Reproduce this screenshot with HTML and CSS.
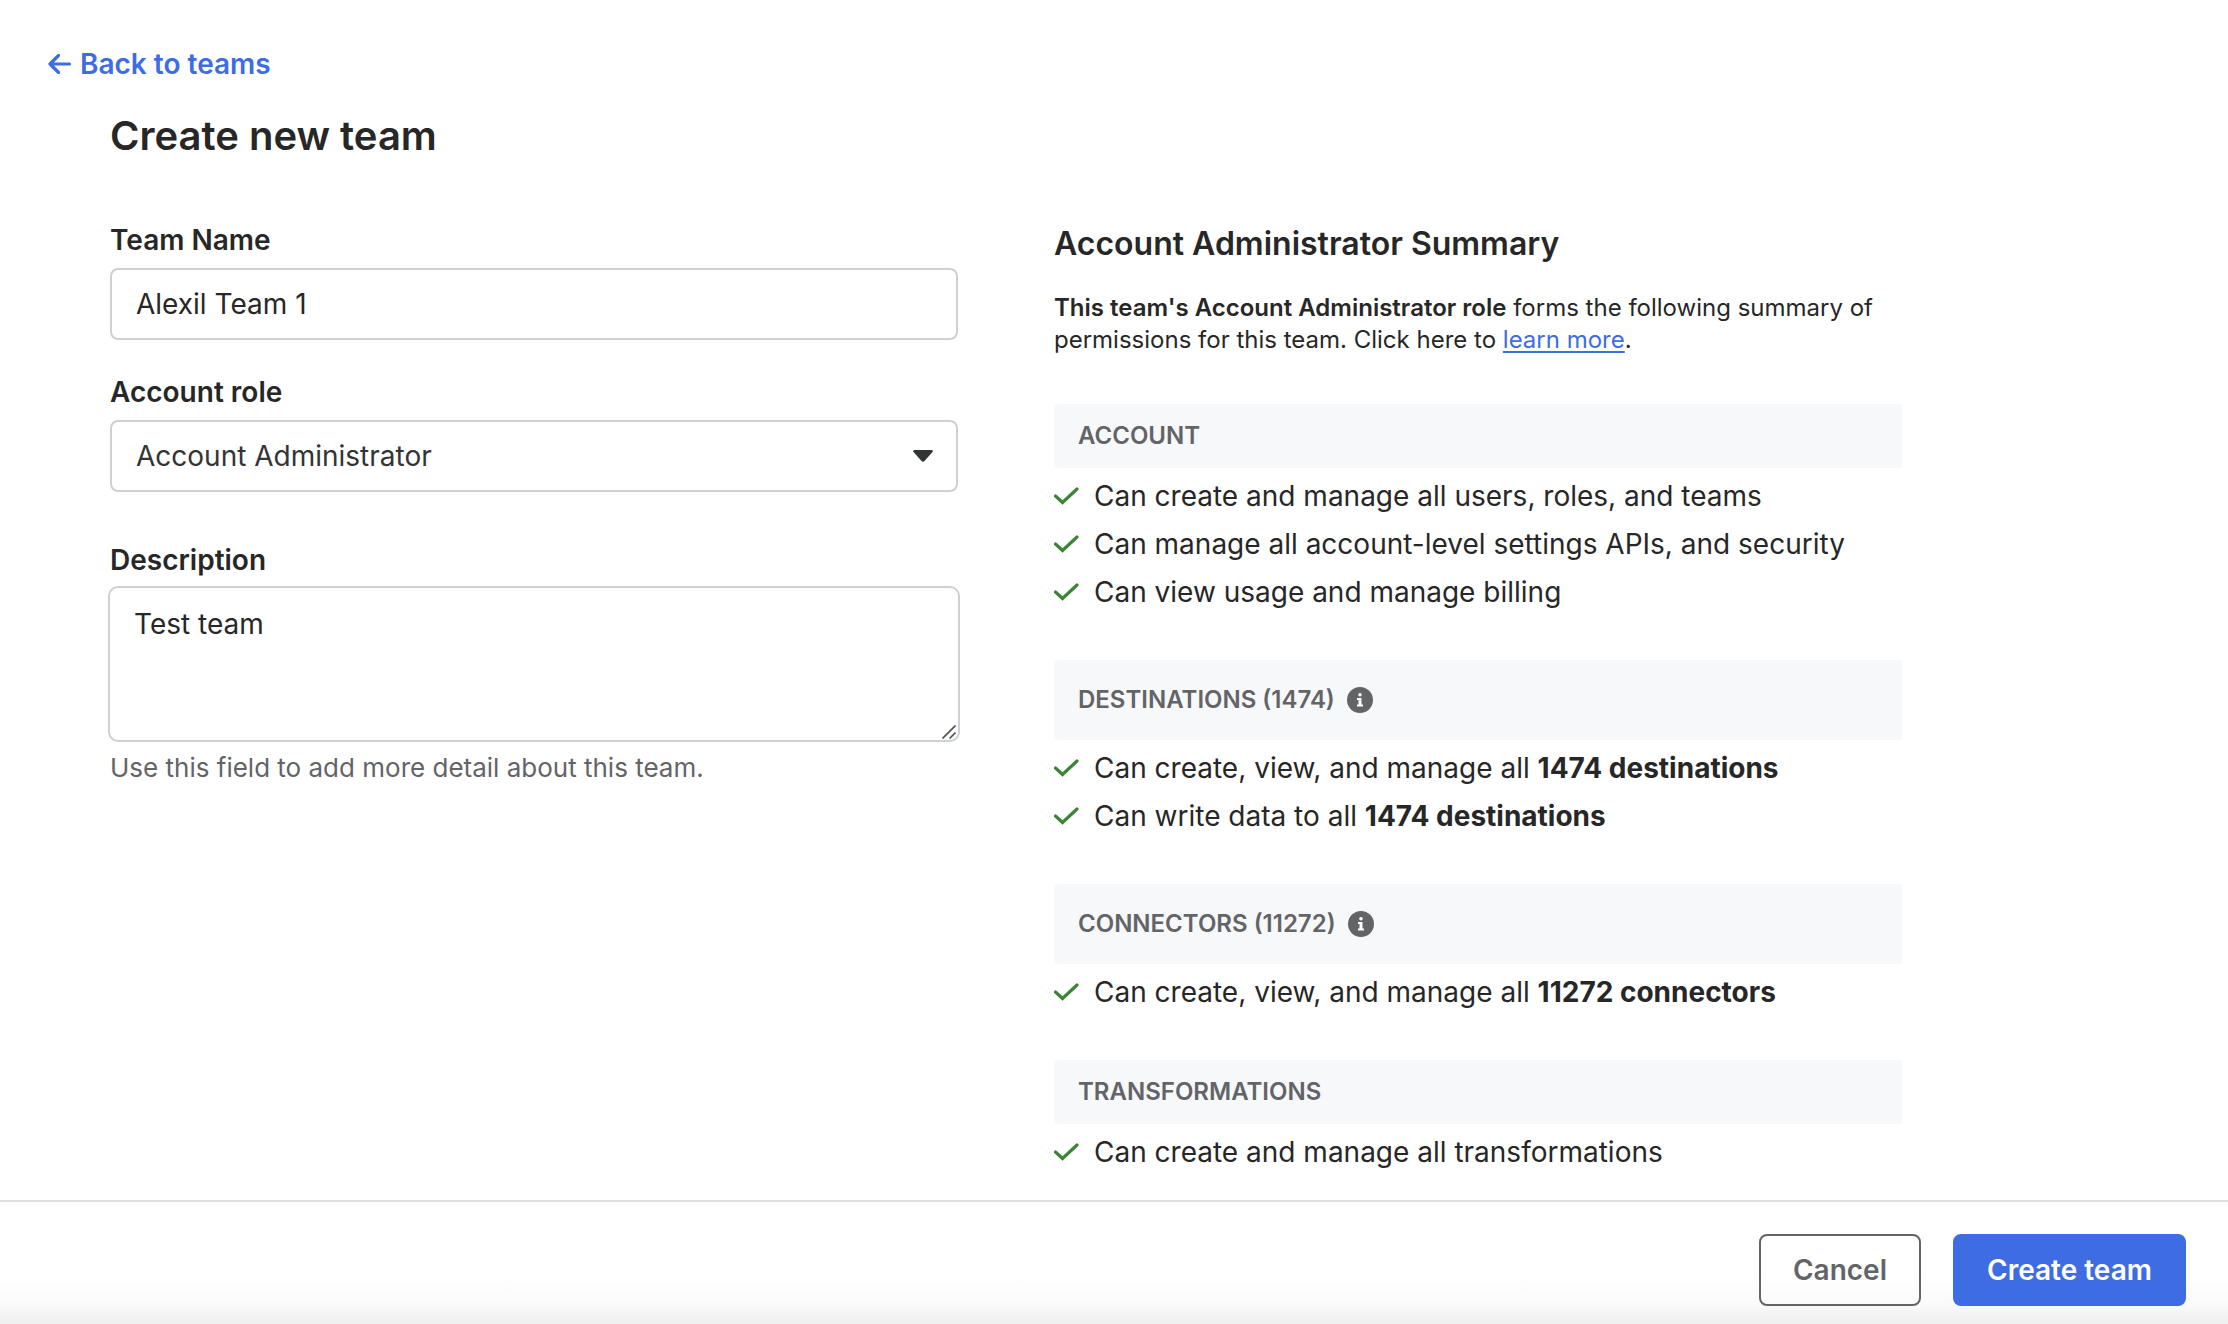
FILE: index.html
```html
<!DOCTYPE html>
<html lang="en">
<head>
<meta charset="utf-8">
<meta name="viewport" content="width=device-width, initial-scale=1">
<title>Create new team</title>
<link rel="stylesheet" href="styles.css">
</head>
<body>
<svg class="sprite" aria-hidden="true">
  <symbol id="check" viewBox="0 0 25 18"><path d="M1.500 9 8.500 15.500 23 2" fill="none" stroke="currentColor" stroke-width="3.200" stroke-linecap="round" stroke-linejoin="miter"/></symbol>
  <symbol id="info" viewBox="0 0 26 26"><circle cx="13" cy="13" r="13" fill="currentColor"/><circle cx="13" cy="7.800" r="1.800" fill="#fff"/><path d="M10 11h4.500v6.500H16V19.500H10V17.500h1.500V13H10z" fill="#fff"/></symbol>
</svg>
<main class="page">
  <a class="back" href="#teams">
    <svg class="back-icon" viewBox="0 0 24 20" aria-hidden="true"><path d="M10.500 1.500 2 10 10.500 18.500M2 10H21.500" fill="none" stroke="currentColor" stroke-width="3.200" stroke-linecap="round" stroke-linejoin="round"/></svg>
    Back to teams
  </a>
  <div class="content">
    <h1 class="title">Create new team</h1>
    <div class="columns">
      <form class="form" id="team-form">
        <div class="field">
          <label class="label" for="name">Team Name</label>
          <input class="control" id="name" type="text" value="Alexil Team 1">
        </div>
        <div class="field">
          <label class="label" for="role">Account role</label>
          <div class="select-wrap">
            <select class="control select" id="role"><option>Account Administrator</option></select>
            <svg class="caret" viewBox="0 0 20 12" aria-hidden="true"><path d="M1.500 0h17q2.200.4 1 2L11.500 11q-1.500 1.500-3 0L.5 2Q-.7.4 1.500 0z" fill="#333436"/></svg>
          </div>
        </div>
        <div class="field field-description">
          <label class="label" for="description">Description</label>
          <div class="area-wrap">
            <textarea class="control area" id="description" aria-describedby="hint">Test team</textarea>
            <svg class="grip" viewBox="0 0 14 14" aria-hidden="true"><path d="M.5 13.500 13.500.5M7.500 13.500 13.500 7.500" fill="none" stroke="#505154" stroke-width="1.600"/></svg>
          </div>
          <p class="hint" id="hint">Use this field to add more detail about this team.</p>
        </div>
      </form>
      <section class="summary">
        <h2 class="summary-title">Account Administrator Summary</h2>
        <p class="intro"><b>This team's Account Administrator role</b> forms the following summary of permissions for this team. Click here to <a class="link" href="#roles">learn more</a>.</p>
        <div class="groups">
          <section>
            <h3 class="group-title">ACCOUNT</h3>
            <ul class="list">
              <li class="item"><svg class="check"><use href="#check"/></svg><span>Can create and manage all users, roles, and teams</span></li>
              <li class="item"><svg class="check"><use href="#check"/></svg><span>Can manage all account-level settings APIs, and security</span></li>
              <li class="item"><svg class="check"><use href="#check"/></svg><span>Can view usage and manage billing</span></li>
            </ul>
          </section>
          <section>
            <h3 class="group-title group-title-tall">DESTINATIONS (1474)<svg class="info"><use href="#info"/></svg></h3>
            <ul class="list">
              <li class="item"><svg class="check"><use href="#check"/></svg><span>Can create, view, and manage all <b class="count">1474 destinations</b></span></li>
              <li class="item"><svg class="check"><use href="#check"/></svg><span>Can write data to all <b class="count">1474 destinations</b></span></li>
            </ul>
          </section>
          <section>
            <h3 class="group-title group-title-tall">CONNECTORS (11272)<svg class="info"><use href="#info"/></svg></h3>
            <ul class="list">
              <li class="item"><svg class="check"><use href="#check"/></svg><span>Can create, view, and manage all <b class="count">11272 connectors</b></span></li>
            </ul>
          </section>
          <section>
            <h3 class="group-title">TRANSFORMATIONS</h3>
            <ul class="list">
              <li class="item"><svg class="check"><use href="#check"/></svg><span>Can create and manage all transformations</span></li>
            </ul>
          </section>
        </div>
      </section>
    </div>
  </div>
</main>
<footer class="footer">
  <button class="button button-cancel" type="button">Cancel</button>
  <button class="button button-primary" type="submit" form="team-form">Create team</button>
</footer>
</body>
</html>
```

FILE: styles.css
```css
* {
  box-sizing: border-box;
}

body {
  margin: 0;
  min-height: 100vh;
  display: flex;
  flex-direction: column;
  background: #fff;
  color: #272727;
  font: 400 28px/40px Inter, "Liberation Sans", sans-serif;
}

h1, h2, h3, p, ul {
  margin: 0;
  padding: 0;
}

.sprite {
  display: none;
}

.page {
  flex: 1;
  padding: 44px 48px 24px;
}

.back {
  display: inline-flex;
  align-items: center;
  gap: 8px;
  color: #3e6ce2;
  font-weight: 600;
  text-decoration: none;
}

.back-icon {
  width: 24px;
  height: 20px;
}

.content {
  max-width: 1792px;
  margin-left: 62px;
}

.title {
  margin-top: 24px;
  font-size: 40px;
  line-height: 56px;
  font-weight: 600;
}

.columns {
  display: grid;
  grid-template-columns: 1fr 1fr;
  gap: 96px;
  margin-top: 56px;
}

.form {
  display: flex;
  flex-direction: column;
  gap: 32px;
}

.field {
  display: flex;
  flex-direction: column;
}

.field-description {
  margin-top: 16px;
}

.label {
  margin-bottom: 8px;
  font-weight: 600;
}

.control {
  width: 100%;
  height: 72px;
  padding: 0 24px;
  border: 2px solid #cdd1d6;
  border-radius: 8px;
  background: #fff;
  color: inherit;
  font: inherit;
}

.select-wrap {
  display: grid;
  align-items: center;
}

.select-wrap > * {
  grid-area: 1 / 1;
}

.select {
  appearance: none;
  color: #333436;
}

.caret {
  width: 20px;
  height: 12px;
  margin-right: 25px;
  justify-self: end;
  pointer-events: none;
}

.area-wrap {
  position: relative;
  margin: -2px -2px 0;
}

.area {
  display: block;
  height: 156px;
  padding: 16px 24px;
  border-radius: 10px;
  resize: vertical;
}

.area::-webkit-resizer {
  background: transparent;
}

.grip {
  position: absolute;
  right: 4px;
  bottom: 3px;
  width: 14px;
  height: 14px;
  pointer-events: none;
}

.hint {
  margin-top: 6px;
  color: #636467;
  font-size: 26px;
}

.summary-title {
  margin-top: 4px;
  font-size: 32px;
  line-height: 40px;
  font-weight: 600;
}

.intro {
  margin-top: 28px;
  font-size: 24px;
  line-height: 32px;
}

.intro b {
  font-weight: 600;
}

.link {
  color: #3e6ce2;
  text-underline-offset: 3px;
  text-decoration-thickness: 2px;
}

.groups {
  display: flex;
  flex-direction: column;
  gap: 44px;
  margin-top: 48px;
}

.group-title {
  display: flex;
  align-items: center;
  gap: 12px;
  padding: 16px 24px;
  border-radius: 4px;
  background: #f7f8fa;
  color: #636467;
  font-size: 24px;
  line-height: 32px;
  font-weight: 600;
}

.group-title-tall {
  padding: 24px;
}

.info {
  width: 26px;
  height: 26px;
}

.list {
  padding-top: 4px;
  list-style: none;
}

.item {
  display: flex;
  align-items: center;
  gap: 15px;
  line-height: 48px;
}

.check {
  flex: none;
  width: 25px;
  height: 18px;
  color: #3d8536;
}

.count {
  font-weight: 700;
}

.footer {
  display: flex;
  justify-content: flex-end;
  gap: 32px;
  padding: 32px 42px 18px;
  border-top: 2px solid #dee0e4;
  background: linear-gradient(to top, #eee, #fafafa 20px, #fff 50px);
}

.button {
  height: 72px;
  padding: 0 32px;
  border: 2px solid #636467;
  border-radius: 8px;
  background: transparent;
  color: #636467;
  font: inherit;
  font-weight: 600;
}

.button-primary {
  border-color: #3e6ce2;
  background: #3e6ce2;
  color: #fff;
}
```
